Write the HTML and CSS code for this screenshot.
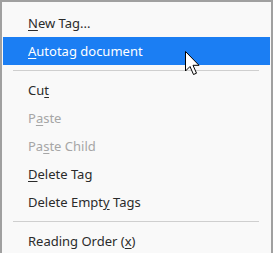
FILE: index.html
```html
<!DOCTYPE html>
<html lang="en">
<head>
    <meta charset="UTF-8">
    <title>Tag context menu</title>
    <link rel="stylesheet" href="styles.css">
</head>
<body>
    <div class="menu">
        <div class="menu-item"><u>N</u>ew Tag...</div>
        <div class="menu-item active"><u>A</u>utotag document</div>
        <div class="separator"></div>
        <div class="menu-item">Cu<u>t</u></div>
        <div class="menu-item disabled">P<u>a</u>ste</div>
        <div class="menu-item disabled">Pa<u>s</u>te Child</div>
        <div class="menu-item"><u>D</u>elete Tag</div>
        <div class="menu-item">Delete Empt<u>y</u> Tags</div>
        <div class="separator"></div>
        <div class="menu-item">Reading Order (<u>x</u>)</div>
    </div>
    <svg class="cursor" width="18" height="26" viewBox="0 0 18 26">
        <path d="M1.5 1.5 L1.5 21 L6 16.5 L9.5 24.5 L12.5 23.2 L9 15.3 L15 15.3 Z" fill="#fff" stroke="#000" stroke-width="1" stroke-linejoin="miter"/>
    </svg>
</body>
</html>
```

FILE: styles.css
```css
body {
    margin: 0;
    font-family: "Noto Sans", "Open Sans", sans-serif;
    font-size: 13px;
    background-color: #f9f9f9;
    overflow: hidden;
}
.menu {
    height: 253px;
    box-sizing: border-box;
    border: 2px solid #a0a0a0;
    border-bottom: none;
    padding: 7px 1px 0 1px;
    background-color: #f9f9f9;
}
.menu-item {
    height: 28px;
    line-height: 28px;
    padding-left: 25px;
    color: #2b2b2b;
    white-space: nowrap;
}
.menu-item u {
    text-underline-offset: 2px;
}
.menu-item.active {
    background-color: #1b7ef3;
    color: #ffffff;
}
.menu-item.disabled {
    color: #a6a6a6;
}
.separator {
    height: 11px;
    display: flex;
    align-items: center;
    padding: 0 11px 0 10px;
}
.separator::before {
    content: "";
    flex: 1;
    height: 1px;
    background-color: #cfcfcf;
}
.cursor {
    position: absolute;
    left: 184px;
    top: 50px;
}
```
